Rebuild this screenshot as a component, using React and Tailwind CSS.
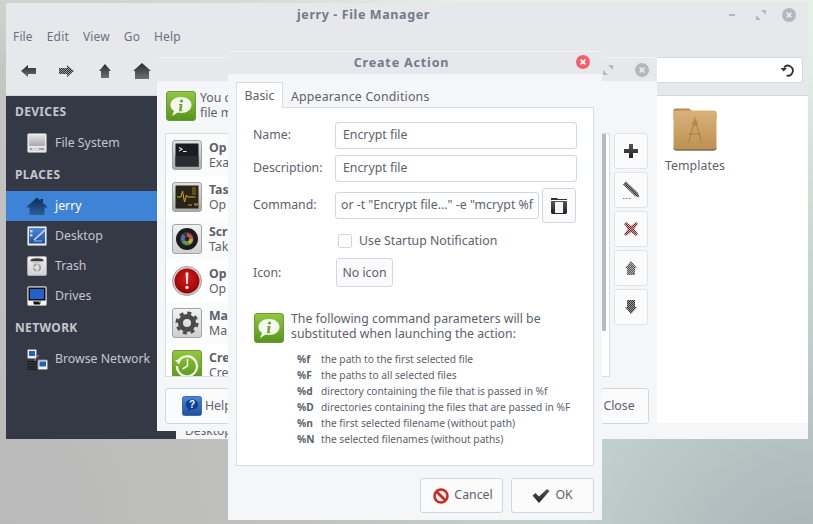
import React from "react";

const Defs = () => (
  <svg width="0" height="0" className="absolute">
    <defs>
      <linearGradient id="gDark" x1="0" y1="0" x2="0" y2="1"><stop offset="0" stopColor="#2c2c2c" /><stop offset="1" stopColor="#6e6e6e" /></linearGradient>
      <linearGradient id="gDark2" x1="0" y1="0" x2="0" y2="1"><stop offset="0" stopColor="#555" /><stop offset="1" stopColor="#222" /></linearGradient>
      <linearGradient id="gGreen" x1="0" y1="0" x2="0" y2="1"><stop offset="0" stopColor="#93c83f" /><stop offset="1" stopColor="#57941d" /></linearGradient>
      <linearGradient id="gTile" x1="0" y1="0" x2="0" y2="1"><stop offset="0" stopColor="#e2e2e2" /><stop offset="1" stopColor="#a9a9a9" /></linearGradient>
      <linearGradient id="gTile2" x1="0" y1="0" x2="0" y2="1"><stop offset="0" stopColor="#f2f2f2" /><stop offset="1" stopColor="#cfcfcf" /></linearGradient>
      <linearGradient id="gBlue" x1="0" y1="0" x2="0" y2="1"><stop offset="0" stopColor="#4a8ad8" /><stop offset="1" stopColor="#1f4f9c" /></linearGradient>
      <linearGradient id="gFolder" x1="0" y1="0" x2="0" y2="1"><stop offset="0" stopColor="#d9b27c" /><stop offset="1" stopColor="#bd9050" /></linearGradient>
      <linearGradient id="gHome" x1="0" y1="0" x2="0" y2="1"><stop offset="0" stopColor="#0e2c55" /><stop offset="1" stopColor="#2a5f9e" /></linearGradient>
      <radialGradient id="gRed" cx="0.5" cy="0.4" r="0.6"><stop offset="0" stopColor="#d81c1c" /><stop offset="1" stopColor="#950303" /></radialGradient>
      <pattern id="dith" width="2" height="2" patternUnits="userSpaceOnUse"><rect width="2" height="2" fill="#9a9a9a" /><rect width="1" height="1" fill="#333" /><rect x="1" y="1" width="1" height="1" fill="#333" /></pattern>
      <pattern id="dithLight" width="2" height="2" patternUnits="userSpaceOnUse"><rect width="2" height="2" fill="#b4b4b4" /><rect width="1" height="1" fill="#555" /><rect x="1" y="1" width="1" height="1" fill="#555" /></pattern>
      <pattern id="dithRed" width="2" height="2" patternUnits="userSpaceOnUse"><rect width="2" height="2" fill="#c9b0b0" /><rect width="1" height="1" fill="#7a2020" /><rect x="1" y="1" width="1" height="1" fill="#7a2020" /></pattern>
    </defs>
  </svg>
);

const Info = () => (
  <svg width="30" height="30" viewBox="0 0 30 30" className="shrink-0">
    <rect x="0.5" y="0.5" width="29" height="29" rx="2.5" fill="url(#gGreen)" stroke="#6d9a38" />
    <path d="M15 6c6 0 10.500 3.300 10.500 8S21 22 15 22c-1.200 0-2.300-.1-3.300-.4L6 25l2-5c-2.200-1.400-3.500-3.500-3.500-6C4.500 9.300 9 6 15 6z" fill="#f4f7ee" />
    <circle cx="15.500" cy="10" r="1.600" fill="#6ea32a" />
    <path d="M13.200 13h3.300l-1 6.300h1l-.3.900h-3.300l1-6.300h-1z" fill="#6ea32a" />
  </svg>
);

const Tile = ({ children, fill = "url(#gTile)" }) => (
  <svg width="30" height="30" viewBox="0 0 30 30" className="shrink-0">
    <rect x="0.5" y="0.5" width="29" height="29" rx="2.5" fill={fill} stroke="#a3a3a3" />
    {children}
  </svg>
);

const Term = () => (
  <Tile>
    <rect x="3.500" y="3.500" width="23" height="23" fill="#1b1c22" />
    <rect x="3.500" y="16" width="23" height="10.500" fill="#2a2c34" />
    <path d="M7 7.500l3 1.800-3 1.800" fill="none" stroke="#f0f0f0" strokeWidth="1.100" />
    <path d="M11 11.500h3.500" stroke="#f0f0f0" strokeWidth="1.100" />
  </Tile>
);
const Task = () => (
  <Tile>
    <rect x="3.500" y="3.500" width="23" height="23" fill="#29241a" />
    <path d="M5 15h4l1.500-6 2 11 2-7 1 2h8" fill="none" stroke="#d9a520" strokeWidth="1" />
    <path d="M21 5v8M23 5v8" stroke="#8a6d1c" strokeWidth="1.200" />
    <path d="M16 23h4M22 22l2 1.500 2-1.500z" stroke="#c69a24" strokeWidth="1" />
  </Tile>
);
const Shot = () => (
  <Tile fill="url(#gTile2)">
    <circle cx="15" cy="15" r="11" fill="#1b1b1d" />
    <circle cx="15" cy="15" r="7" fill="#3a3a3f" />
    <path d="M15 15V9a6 6 0 0 1 6 6z" fill="#c94f3f" />
    <path d="M15 15h6a6 6 0 0 1-4 5.600z" fill="#c9a83f" />
    <path d="M15 15l2 5.600a6 6 0 0 1-7-2.600z" fill="#5aa34a" />
    <path d="M15 15l-5 3a6 6 0 0 1 1-8z" fill="#4a6fb0" />
    <circle cx="15" cy="15" r="2.300" fill="#222" />
  </Tile>
);
const Err = () => (
  <svg width="30" height="30" viewBox="0 0 30 30" className="shrink-0">
    <circle cx="15" cy="15" r="14.500" fill="#cfcfcf" stroke="#9f9f9f" />
    <circle cx="15" cy="15" r="12.500" fill="url(#gRed)" />
    <path d="M13.600 6.500h2.800L15.800 18h-1.600z" fill="#f7eaea" />
    <circle cx="15" cy="21.500" r="1.700" fill="#f7eaea" />
  </svg>
);
const Gear = () => (
  <Tile fill="url(#gTile2)">
    <circle cx="15" cy="15" r="6.500" fill="none" stroke="#4a4a4a" strokeWidth="5" />
    <circle cx="15" cy="15" r="10" fill="none" stroke="#4a4a4a" strokeWidth="3" strokeDasharray="4 3.850" />
  </Tile>
);
const Clock = () => (
  <svg width="30" height="30" viewBox="0 0 30 30" className="shrink-0">
    <rect x="0.5" y="0.5" width="29" height="29" rx="2.500" fill="url(#gGreen)" stroke="#6d9a38" />
    <path d="M6.500 11A10 10 0 1 1 5 16" fill="none" stroke="#f2f7e8" strokeWidth="2.300" />
    <path d="M3 10l6-.5-2 5z" fill="#f2f7e8" />
    <path d="M15.500 9v7l-5 3" fill="none" stroke="#f2f7e8" strokeWidth="1.500" />
  </svg>
);
const Help = () => (
  <svg width="20" height="20" viewBox="0 0 20 20" className="shrink-0">
    <rect x="0.5" y="0.5" width="19" height="19" rx="2" fill="url(#gBlue)" stroke="#3a6cae" />
    <path d="M10 3.500c3.800 0 6.300 2.200 6.300 5s-2.500 5-6.300 5c-.5 0-1 0-1.500-.1L5.500 16l.8-3.400C4.700 11.700 3.700 10.200 3.700 8.500c0-2.800 2.500-5 6.300-5z" fill="#0f3f8f" />
    <text x="10" y="12" textAnchor="middle" fontFamily="'Liberation Sans',sans-serif" fontWeight="700" fontSize="10" fill="#f2f5fb">?</text>
  </svg>
);
const Close = ({ color = "#b4b8bb", x = "#e8e9ec" }) => (
  <svg width="14" height="14" viewBox="0 0 14 14" className="shrink-0">
    <circle cx="7" cy="7" r="7" fill={color} />
    <path d="M4.700 4.700l4.600 4.600M9.300 4.700l-4.600 4.600" stroke={x} strokeWidth="1.800" />
  </svg>
);
const Restore = () => (
  <svg width="10" height="10" viewBox="0 0 10 10" className="shrink-0">
    <path d="M5 0h5v5zM0 5l5 5H0z" fill="#b4b8bb" />
  </svg>
);
const ArrowIcon = ({ d, fill = "url(#gDark)", w = 16, h = 16, vb = "0 0 16 16" }) => (
  <svg width={w} height={h} viewBox={vb} className="shrink-0"><path d={d} fill={fill} /></svg>
);
const Drive = () => (
  <svg width="20" height="20" viewBox="0 0 20 20" className="shrink-0">
    <rect x="0.500" y="0.500" width="19" height="19" rx="1.500" fill="#ececec" stroke="#9c9c9c" />
    <rect x="2" y="2" width="16" height="11" fill="url(#gTile)" />
    <rect x="2" y="14.500" width="16" height="3.500" fill="#d6d6d6" />
    <path d="M3 16h2M12 16h5" stroke="#6e6e6e" strokeWidth="1.200" />
  </svg>
);
const Desk = () => (
  <svg width="20" height="20" viewBox="0 0 20 20" className="shrink-0">
    <rect x="0.500" y="0.500" width="19" height="19" rx="1" fill="#e9e9e9" stroke="#9aa4b3" />
    <rect x="2" y="2" width="16" height="15.500" fill="url(#gBlue)" />
    <rect x="3" y="4" width="2.500" height="2.500" fill="#bcd0ee" />
    <rect x="3" y="8" width="2.500" height="2.500" fill="#bcd0ee" />
    <path d="M7 14L18 4" stroke="#dcdcdc" strokeWidth="1.500" />
    <path d="M7 15h8" stroke="#9ec0ec" />
  </svg>
);
const Trash = () => (
  <svg width="20" height="20" viewBox="0 0 20 20" className="shrink-0">
    <rect x="0.500" y="0.500" width="19" height="19" rx="1.500" fill="url(#gTile2)" stroke="#a9a9a9" />
    <ellipse cx="10" cy="4.500" rx="6.500" ry="2.300" fill="#3a3a3a" />
    <path d="M4 5l1.200 12h9.600L16 5" fill="#dcdcdc" opacity="0.8" />
    <circle cx="10" cy="11.500" r="3.300" fill="none" stroke="#9c9c9c" strokeWidth="1.600" strokeDasharray="4 1.500" />
  </svg>
);
const Screen = () => (
  <svg width="20" height="20" viewBox="0 0 20 20" className="shrink-0">
    <rect x="0.500" y="0.500" width="19" height="19" rx="1.500" fill="#f4f4f4" stroke="#aaa" />
    <rect x="1.500" y="1.500" width="17" height="13" fill="#0a0a0a" />
    <rect x="3" y="3" width="14" height="10" fill="#1f62cc" />
    <path d="M6 15.500h8l-1 3H7z" fill="#111" />
    <rect x="12" y="16" width="2" height="1" fill="#6cc04a" />
  </svg>
);
const Net = () => (
  <svg width="21" height="21" viewBox="0 0 21 21" className="shrink-0">
    <path d="M8 12V7h4" fill="none" stroke="#9aa0aa" />
    <rect x="0.500" y="0.500" width="9" height="9" rx="1" fill="#f2f2f2" stroke="#888" />
    <rect x="2" y="2" width="6" height="5" fill="#1f60c0" />
    <rect x="0.500" y="12" width="9" height="9" fill="#1b1d22" />
    <path d="M1.500 14h7M1.500 16.500h7M1.500 19h7" stroke="#5b6a50" strokeDasharray="1 1" />
    <rect x="11" y="11" width="9.500" height="9.500" rx="1" fill="#f4f4f4" stroke="#888" />
    <rect x="12.500" y="12.500" width="6.500" height="5" fill="#1f60c0" />
  </svg>
);
const HomeIco = () => (
  <svg width="20" height="20" viewBox="0 0 20 20" className="shrink-0">
    <path d="M10 1.500l3.500 3.200V3h2.500v4L20 10.500v1h-2.500V19h-15v-7.500H0v-1z" fill="url(#gHome)" />
  </svg>
);
const Folder = () => (
  <svg width="44" height="44" viewBox="0 0 44 44" className="shrink-0">
    <path d="M2 1.500h14l3 2.500h22a2.500 2.500 0 0 1 2.500 2.500V12H.5V3.500a2 2 0 0 1 1.500-2z" fill="#b58a4c" />
    <rect x="0.500" y="3.500" width="43" height="40" rx="3" fill="url(#gFolder)" />
    <path d="M3.500 43.500h37a3 3 0 0 0 3-3v-1a3 3 0 0 1-3 3h-37a3 3 0 0 1-3-3v1a3 3 0 0 0 3 3z" fill="#5d5d60" />
    <g fill="none" stroke="#a97e42" strokeWidth="1">
      <path d="M22 10v4M20 19l2-5 2 5M20.500 18h3M20 19l-4.500 17M24 19l4.500 17M16 27h12" />
      <circle cx="22" cy="16" r="2.200" />
    </g>
  </svg>
);
const NoSign = () => (
  <svg width="16" height="16" viewBox="0 0 16 16" className="shrink-0">
    <circle cx="8" cy="8" r="6.500" fill="#fbf2f2" stroke="#c92a22" strokeWidth="2.500" />
    <path d="M3.500 3.500l9 9" stroke="#c92a22" strokeWidth="2.800" />
  </svg>
);
const Check = () => (
  <svg width="18" height="16" viewBox="0 0 18 16" className="shrink-0">
    <path d="M0.500 7.500l3-2.500 3.500 3.500L15 1l2.500 2L7 15z" fill="url(#gDark2)" />
  </svg>
);

const font = "font-['Noto_Sans',sans-serif]";

const SideHead = ({ children, cls = "" }) => (
  <div className={`pl-[9px] font-bold text-[12px] leading-[16px] tracking-[0.35px] text-[#c4c7ce] ${cls}`}>{children}</div>
);
const SideItem = ({ icon, label, active, cls = "" }) => (
  <div className={`h-[30px] flex items-center pl-[21px] gap-[8px] text-[12.300px] ${active ? "bg-[#3f83d6] text-white" : "text-[#c4c7ce]"} ${cls}`}>
    <span className="w-[20px] flex justify-center">{icon}</span>
    <span>{label}</span>
  </div>
);

const rows = [
  [<Term />, "Op", "Exa"],
  [<Task />, "Tas", "Op"],
  [<Shot />, "Scr", "Tak"],
  [<Err />, "Op", "Op"],
  [<Gear />, "Ma", "Ma"],
  [<Clock />, "Cre", "Cre"],
];

const ToolBtn = ({ children }) => (
  <div className="w-[34px] h-[36px] flex items-center justify-center bg-[#fbfbfc] border border-[#dde2ec] rounded-[3px]">{children}</div>
);
const Btn = ({ children, cls = "" }) => (
  <div className={`flex items-center justify-center bg-[#fbfbfc] border border-[#cfd6e6] rounded-[3px] ${cls}`}>{children}</div>
);
const Input = ({ children, cls = "" }) => (
  <div className={`h-[27px] bg-white border border-[#cfd6e6] rounded-[3px] flex items-center overflow-hidden whitespace-nowrap ${cls}`}>{children}</div>
);

const FormRow = ({ label, children, cls = "" }) => (
  <div className={`flex items-center ${cls}`}>
    <div className="w-[98px] shrink-0 pl-[16px]">{label}</div>
    {children}
  </div>
);

const params = [
  ["%f", "the path to the first selected file"],
  ["%F", "the paths to all selected files"],
  ["%d", "directory containing the file that is passed in %f"],
  ["%D", "directories containing the files that are passed in %F"],
  ["%n", "the first selected filename (without path)"],
  ["%N", "the selected filenames (without paths)"],
];

export default function App() {
  return (
    <div className={`relative w-[813px] h-[524px] overflow-hidden text-[#5c616c] text-[12.300px] ${font} bg-[radial-gradient(circle_at_100%_110%,#a6b0b6_0%,#bfcfcb_24%,transparent_52%),radial-gradient(circle_at_0%_100%,#b9b9b9_0%,#c4c4c2_45%,transparent_72%),linear-gradient(180deg,#e6f0e6_0%,#d8e8de_60%,#d6d6ce_100%)]`}>
      <Defs />

      {/* File manager window */}
      <div className="absolute left-[6px] top-[3px] w-[802px] h-[436px] flex flex-col bg-[#e6e8eb]">
        <div className="h-[23px] shrink-0 flex items-center pl-[720px] pr-[12px] relative">
          <span className="absolute left-[291px] top-[3px] font-bold text-[12.500px] tracking-[0.6px] text-[#747a8a]">jerry - File Manager</span>
          <div className="flex items-center w-full">
            <span className="w-[7px] h-[2px] bg-[#b4b8bb] ml-[3px]" />
            <span className="ml-[21px]"><Restore /></span>
            <span className="ml-[16px]"><Close /></span>
          </div>
        </div>
        <div className="h-[22px] shrink-0 flex items-center pl-[7px] gap-[14px] tracking-[0.15px] text-[#6b7182] text-[12px]">
          <span>File</span><span>Edit</span><span>View</span><span>Go</span><span>Help</span>
        </div>
        <div className="h-[47px] shrink-0 flex items-center pl-[15px] pb-[2px] relative">
          <ArrowIcon d="M7 2v3h8v6H7v3L0 8z" fill="url(#gDark)" />
          <span className="ml-[21px]"><ArrowIcon d="M9 2v3H1v6h8v3l7-6z" fill="url(#dith)" /></span>
          <span className="ml-[23px]"><ArrowIcon d="M8 1l6 7h-2v7H4V8H2z" /></span>
          <span className="ml-[20px]"><ArrowIcon d="M9 0l9 8h-2v8H2V8H0z" w={18} h={16} vb="0 0 18 16" /></span>
          <div className="absolute right-[5px] top-[9px] w-[300px] h-[26px] bg-white border border-[#cfd6e6] rounded-[3px] flex items-center justify-end pr-[8px]">
            <svg width="14" height="14" viewBox="0 0 14 14"><path d="M4 4.500A5 5 0 1 1 6.500 12.500" fill="none" stroke="#333" strokeWidth="1.800" /><path d="M0.500 5h6.500l-3.300 3.500z" fill="#333" /></svg>
          </div>
        </div>
        <div className="flex-1 flex min-h-0 border-t border-[#d3d6dd]">
          <aside className="w-[170px] shrink-0 bg-[#353945] pt-[8px]">
            <SideHead>DEVICES</SideHead>
            <SideItem icon={<Drive />} label="File System" cls="mt-[8px]" />
            <SideHead cls="mt-[9px]">PLACES</SideHead>
            <SideItem icon={<HomeIco />} label="jerry" active cls="mt-[8px]" />
            <SideItem icon={<Desk />} label="Desktop" />
            <SideItem icon={<Trash />} label="Trash" />
            <SideItem icon={<Screen />} label="Drives" />
            <SideHead cls="mt-[9px]">NETWORK</SideHead>
            <SideItem icon={<Net />} label="Browse Network" cls="mt-[8px]" />
          </aside>
          <main className="flex-1 min-w-0 flex flex-col bg-[#f5f6f7]">
            <div className="flex-1 bg-white pl-[489px] pt-[11px]">
              <div className="w-[60px] flex flex-col items-center">
                <Folder />
                <span className="mt-[6px] leading-[17px] tracking-[0.1px]">Templates</span>
              </div>
            </div>
            <div className="h-[17px] shrink-0 pl-[9px] text-[12px] leading-[17px] -mt-[1px]">Desktop</div>
          </main>
        </div>
      </div>

      {/* Action configuration dialog */}
      <div className="absolute left-[157px] top-[57px] w-[500px] h-[374px] flex flex-col bg-[#f5f6f7]">
        <div className="h-[24px] shrink-0 bg-[#e6e8eb] border-t border-[#f2f3f5] flex items-center justify-end pr-[8px]">
          <span className="mr-[22px]"><Restore /></span>
          <Close />
        </div>
        <div className="flex-1 flex flex-col pl-[8px] pr-[8px] pt-[10px] min-h-0">
          <div className="flex items-start gap-[4px] pl-[1px] h-[42px] shrink-0">
            <Info />
            <div className="leading-[15px] -mt-[1px] whitespace-nowrap">
              <div>You c</div>
              <div>file m</div>
            </div>
          </div>
          <div className="flex gap-[4px] h-[244px] shrink-0">
            <div className="w-[445px] shrink-0 border border-[#d8dce6] bg-white flex overflow-hidden">
              <div className="flex-1 min-w-0 overflow-hidden">
                {rows.map(([icon, a, b], i) => (
                  <div key={i} className={`h-[42px] shrink-0 flex items-center pl-[6px] gap-[7px] ${i % 2 ? "bg-white" : "bg-[#fafbfb]"}`}>
                    {icon}
                    <div className="leading-[15px]">
                      <div className="font-bold">{a}</div>
                      <div>{b}</div>
                    </div>
                  </div>
                ))}
              </div>
              <div className="w-[7px] shrink-0 bg-white">
                <div className="w-[4px] h-[197px] bg-[#b8babe] rounded-b-[1px]" />
              </div>
            </div>
            <div className="flex flex-col gap-[3px]">
              <ToolBtn><ArrowIcon d="M6 1h4v5h5v4h-5v5H6v-5H1V6h5z" fill="url(#gDark2)" /></ToolBtn>
              <ToolBtn>
                <svg width="18" height="18" viewBox="0 0 18 18"><path d="M1 3.500L4 .5 16 12l1.500 4.500-4.500-1.500z" fill="url(#dith)" /><path d="M1 17.500h1.500M4 17.500h1.500M7 17.500h1.500" stroke="#777" /></svg>
              </ToolBtn>
              <ToolBtn><ArrowIcon d="M3 1l5 4 5-4 2 2-4 5 4 5-2 2-5-4-5 4-2-2 4-5-4-5z" fill="url(#dithRed)" /></ToolBtn>
              <ToolBtn><ArrowIcon d="M8 1l6 7h-2v7H4V8H2z" fill="url(#dithLight)" /></ToolBtn>
              <ToolBtn><ArrowIcon d="M4 1h8v7h2l-6 7-6-7h2z" fill="url(#dith)" /></ToolBtn>
            </div>
          </div>
          <div className="flex justify-between mt-[11px] h-[36px] shrink-0">
            <Btn cls="w-[150px] gap-[3px] justify-start pl-[16px]"><Help /><span>Help</span></Btn>
            <Btn cls="w-[60px] ml-auto">Close</Btn>
          </div>
        </div>
      </div>

      {/* Create Action dialog */}
      <div className="absolute left-[228px] top-[51px] w-[374px] h-[469px] flex flex-col bg-[#f5f6f7]">
        <div className="h-[23px] shrink-0 bg-[#e6e8eb] border-t border-[#f2f3f5] flex items-center relative pr-[27px]">
          <span className="w-full text-center font-bold text-[12.500px] tracking-[0.85px] text-[#747a8a]">Create Action</span>
          <span className="absolute right-[12px] top-[3px]"><Close color="#f4606a" x="#ffffff" /></span>
        </div>
        <div className="pl-[8px] pr-[8px] pt-[8px] flex-1 flex flex-col min-h-0">
          <div className="flex h-[26px] shrink-0 relative z-10">
            <div className="w-[47px] h-[26px] pt-[2px] bg-white border border-b-0 border-[#d8dce6] flex items-center justify-center">Basic</div>
            <div className="ml-[8px] pt-[5px] flex items-center tracking-[0.2px]">Appearance Conditions</div>
          </div>
          <div className="h-[359px] shrink-0 -mt-[1px] bg-white border border-[#d8dce6] pt-[14px] flex flex-col">
            <FormRow label="Name:"><Input cls="w-[242px] px-[7px]">Encrypt file</Input></FormRow>
            <FormRow label="Description:" cls="mt-[6px]"><Input cls="w-[242px] px-[7px]">Encrypt file</Input></FormRow>
            <FormRow label="Command:" cls="mt-[6px]">
              <Input cls="w-[204px] h-[26px] px-[5px]">or -t "Encrypt file..." -e "mcrypt %f</Input>
              <Btn cls="w-[34px] h-[35px] ml-[3px]">
                <svg width="18" height="18" viewBox="0 0 18 18"><path d="M1 1h6l1 1h9v1H1z" fill="#333" /><path d="M1 4h16v12l-1 1H2l-1-1z" fill="url(#gDark2)" /><rect x="5" y="5" width="8" height="11" fill="#f4f4f4" /></svg>
              </Btn>
            </FormRow>
            <div className="flex items-center gap-[7px] pl-[101px] mt-[9px]">
              <span className="w-[14px] h-[14px] bg-white border border-[#cfd6e6] rounded-[2px]" />
              <span>Use Startup Notification</span>
            </div>
            <FormRow label="Icon:" cls="mt-[8px]">
              <Btn cls="w-[57px] h-[29px] ml-[1px]">No icon</Btn>
            </FormRow>
            <div className="flex gap-[7px] pl-[17px] mt-[26px]">
              <Info />
              <div className="leading-[15px] -mt-[2px] whitespace-nowrap">
                <div>The following command parameters will be</div>
                <div>substituted when launching the action:</div>
              </div>
            </div>
            <div className="pl-[60px] mt-[8px] text-[10.200px] leading-[16px]">
              {params.map(([k, v]) => (
                <div key={k} className="flex">
                  <span className="w-[24px] shrink-0 font-bold">{k}</span>
                  <span>{v}</span>
                </div>
              ))}
            </div>
          </div>
          <div className="flex justify-end gap-[8px] mt-[12px]">
            <Btn cls="w-[83px] h-[35px] gap-[5px] pl-[3px]"><NoSign /><span>Cancel</span></Btn>
            <Btn cls="w-[83px] h-[35px] gap-[5px]"><Check /><span>OK</span></Btn>
          </div>
        </div>
      </div>
    </div>
  );
}
